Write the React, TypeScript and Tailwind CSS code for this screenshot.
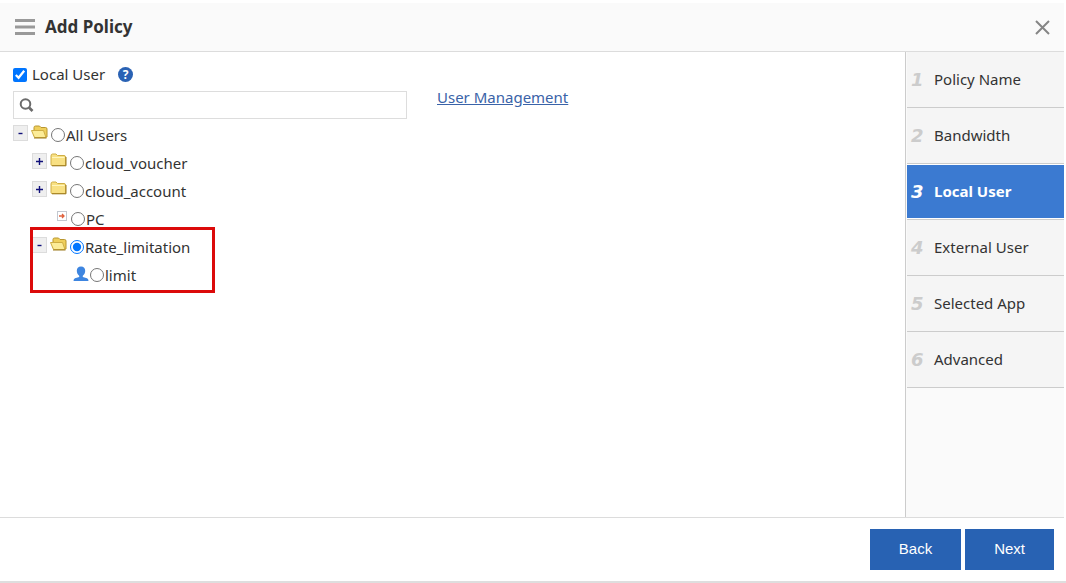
import { useState } from "react";

const steps = ["Policy Name", "Bandwidth", "Local User", "External User", "Selected App", "Advanced"];

function FolderClosed() {
  return (
    <svg width="17" height="14" viewBox="0 0 17 14" className="shrink-0">
      <path d="M1 3 Q1 1 2.5 1 H6 L7.5 2.5 H14 Q15.5 2.5 15.5 4 V12.5 H2 Q1 12.5 1 11.5 Z" fill="#f8e083" stroke="#cfae45" />
      <path d="M2 4.5 H14.5" stroke="#fff6bd" />
      <path d="M2 12.8 H16 V4" fill="none" stroke="#9c7a1e" />
    </svg>
  );
}

function FolderOpen() {
  return (
    <svg width="17" height="14" viewBox="0 0 17 14" className="shrink-0">
      <path d="M3 11 V2.5 Q3 1 4.5 1 H8.5 L10 2.5 H14.5 Q16 2.5 16 4 V12 H4 Z" fill="#efcf5c" stroke="#b8962f" />
      <path d="M0.5 5.5 H12.5 L15 12.5 H3.5 Z" fill="#fcec98" stroke="#cfae45" />
      <path d="M3 13 H15.5" stroke="#9c7a1e" />
    </svg>
  );
}

function LeafIcon() {
  return (
    <svg width="10" height="10" viewBox="0 0 10 10" className="shrink-0">
      <rect x="0.5" y="0.5" width="9" height="9" fill="#fff" stroke="#c3c8d0" />
      <path d="M2 5 H7 M5 3 L7 5 L5 7" fill="none" stroke="#e0603c" strokeWidth="1.3" />
    </svg>
  );
}

function PersonIcon() {
  return (
    <svg width="16" height="16" viewBox="0 0 16 16" className="shrink-0" fill="#3d85e0">
      <path d="M8 0.5 C10.8 0.5 12.2 2.3 12.2 4.8 C12.2 7 11.2 8.8 9.8 9.8 V11 L14 12.3 Q15.5 13 15.5 15 H0.5 Q0.5 13 2 12.3 L6.2 11 V9.8 C4.8 8.8 3.8 7 3.8 4.8 C3.8 2.3 5.2 0.5 8 0.5 Z" />
    </svg>
  );
}

function SearchIcon() {
  return (
    <svg width="16" height="16" viewBox="0 0 16 16" className="absolute left-1.5 top-1.5" fill="none" stroke="#6b6b6b">
      <circle cx="6.5" cy="7" r="4.8" strokeWidth="2" />
      <path d="M10 10.5 L13.5 14" strokeWidth="2.6" />
    </svg>
  );
}

function Toggle({ open }: { open: boolean }) {
  return (
    <button
      type="button"
      aria-label={open ? "Collapse" : "Expand"}
      className="flex h-4 w-[15px] shrink-0 items-center justify-center border border-[#dcdcdc] bg-[#efefef] text-[#10107a]"
    >
      <svg width="7" height="7" viewBox="0 0 7 7" stroke="currentColor" strokeWidth="1.4">
        <path d={open ? "M1.5 3.5 H5.5" : "M0 3.5 H7 M3.5 0 V7"} />
      </svg>
    </button>
  );
}

type NodeProps = {
  id: string;
  label: string;
  selected: string;
  onSelect: (id: string) => void;
};

function NodeRadio({ id, label, selected, onSelect }: NodeProps) {
  return (
    <label className="flex h-7 items-center gap-px">
      <input
        type="radio"
        name="group"
        className="h-3.5 w-3.5"
        checked={selected === id}
        onChange={() => onSelect(id)}
      />
      {label}
    </label>
  );
}

export default function App() {
  const [enabled, setEnabled] = useState(true);
  const [selected, setSelected] = useState("rate");
  const [step, setStep] = useState(2);

  return (
    <div className="flex h-screen flex-col border-b-2 border-[#dedede] bg-white pr-0.5 pt-[3px] font-['Noto_Sans','Open_Sans',sans-serif] text-[15px] text-[#333]">
      <header className="flex h-[49px] shrink-0 items-center border-b border-[#dcdcdc] bg-[#fafafa] pl-[15px] pr-3.5">
        <svg width="20" height="16" viewBox="0 0 20 16" fill="#999">
          <path d="M0 0h20v3H0zM0 6.5h20v3H0zM0 13h20v3H0z" />
        </svg>
        <h1 className="ml-2.5 text-[17px] font-bold">Add Policy</h1>
        <button type="button" aria-label="Close" className="ml-auto">
          <svg width="15" height="15" viewBox="0 0 15 15" stroke="#858585" strokeWidth="2">
            <path d="M1 1 L14 14 M14 1 L1 14" />
          </svg>
        </button>
      </header>

      <div className="flex min-h-0 flex-1">
        <main className="flex flex-1 items-start pl-[13px] pt-2">
          <div className="w-[394px]">
            <div className="flex h-[31px] items-center pb-0.5">
              <label className="flex items-center gap-[5px]">
                <input
                  type="checkbox"
                  className="h-3.5 w-3.5"
                  checked={enabled}
                  onChange={(e) => setEnabled(e.target.checked)}
                />
                Local User
              </label>
              <button
                type="button"
                aria-label="Help"
                className="ml-[13px] flex h-[15px] w-[15px] items-center justify-center rounded-full bg-[#2a62b4] text-xs font-bold leading-none text-white"
              >
                ?
              </button>
            </div>

            <div className="relative">
              <SearchIcon />
              <input
                type="text"
                aria-label="Search"
                className="block h-7 w-full border border-[#ddd] bg-white pl-7 pr-2 outline-none"
              />
            </div>

            <ul className="pt-0.5">
              <li>
                <div className="flex items-start">
                  <div className="flex gap-[3px] pr-[3px] pt-1">
                    <Toggle open />
                    <FolderOpen />
                  </div>
                  <NodeRadio id="all" label="All Users" selected={selected} onSelect={setSelected} />
                </div>
                <ul className="pl-[19px]">
                  <li className="flex items-start">
                    <div className="flex gap-[3px] pr-[3px] pt-1">
                      <Toggle open={false} />
                      <FolderClosed />
                    </div>
                    <NodeRadio id="voucher" label="cloud_voucher" selected={selected} onSelect={setSelected} />
                  </li>
                  <li className="flex items-start">
                    <div className="flex gap-[3px] pr-[3px] pt-1">
                      <Toggle open={false} />
                      <FolderClosed />
                    </div>
                    <NodeRadio id="account" label="cloud_account" selected={selected} onSelect={setSelected} />
                  </li>
                  <li className="flex items-start pl-[25px]">
                    <div className="pr-1 pt-1.5">
                      <LeafIcon />
                    </div>
                    <NodeRadio id="pc" label="PC" selected={selected} onSelect={setSelected} />
                  </li>
                  <li className="relative w-[181px]">
                    <div className="flex items-start">
                      <div className="flex gap-[3px] pr-[3px] pt-1">
                        <Toggle open />
                        <FolderOpen />
                      </div>
                      <NodeRadio id="rate" label="Rate_limitation" selected={selected} onSelect={setSelected} />
                    </div>
                    <div className="flex items-start pl-[41px]">
                      <div className="pr-px pt-[5px]">
                        <PersonIcon />
                      </div>
                      <NodeRadio id="limit" label="limit" selected={selected} onSelect={setSelected} />
                    </div>
                    <div className="pointer-events-none absolute -inset-x-0.5 -bottom-1 -top-1.5 border-3 border-[#dc0a0a]"></div>
                  </li>
                </ul>
              </li>
            </ul>
          </div>

          <a href="#users" className="ml-[30px] pt-[26px] text-[#3a63a8] underline">
            User Management
          </a>
        </main>

        <nav className="w-[159px] shrink-0 border-l border-[#ccc] bg-[#fafafa] pl-px">
          {steps.map((name, i) => (
            <button
              key={name}
              type="button"
              onClick={() => setStep(i)}
              className="block h-14 w-full border-b border-[#ccc] bg-[#f5f5f5] text-left"
            >
              <span
                className={
                  i === step
                    ? "flex h-full items-center border-y border-white bg-[#3b7ad1] pl-1 font-bold text-white"
                    : "flex h-full items-center pl-1"
                }
              >
                <span
                  className={
                    i === step
                      ? "w-[23px] font-['DejaVu_Sans'] text-lg font-bold italic leading-none"
                      : "w-[23px] font-['DejaVu_Sans'] text-lg font-bold italic leading-none text-[#ccc]"
                  }
                >
                  {i + 1}
                </span>
                {name}
              </span>
            </button>
          ))}
        </nav>
      </div>

      <footer className="flex h-16 shrink-0 items-start justify-end gap-1 border-t border-[#dcdcdc] pr-2.5 pt-[11px] font-['Liberation_Sans',sans-serif] text-white">
        <button type="button" className="h-[41px] bg-[#2862b3] px-[29px]" onClick={() => setStep(Math.max(0, step - 1))}>
          Back
        </button>
        <button type="button" className="h-[41px] bg-[#2862b3] px-[29px]" onClick={() => setStep(Math.min(5, step + 1))}>
          Next
        </button>
      </footer>
    </div>
  );
}
